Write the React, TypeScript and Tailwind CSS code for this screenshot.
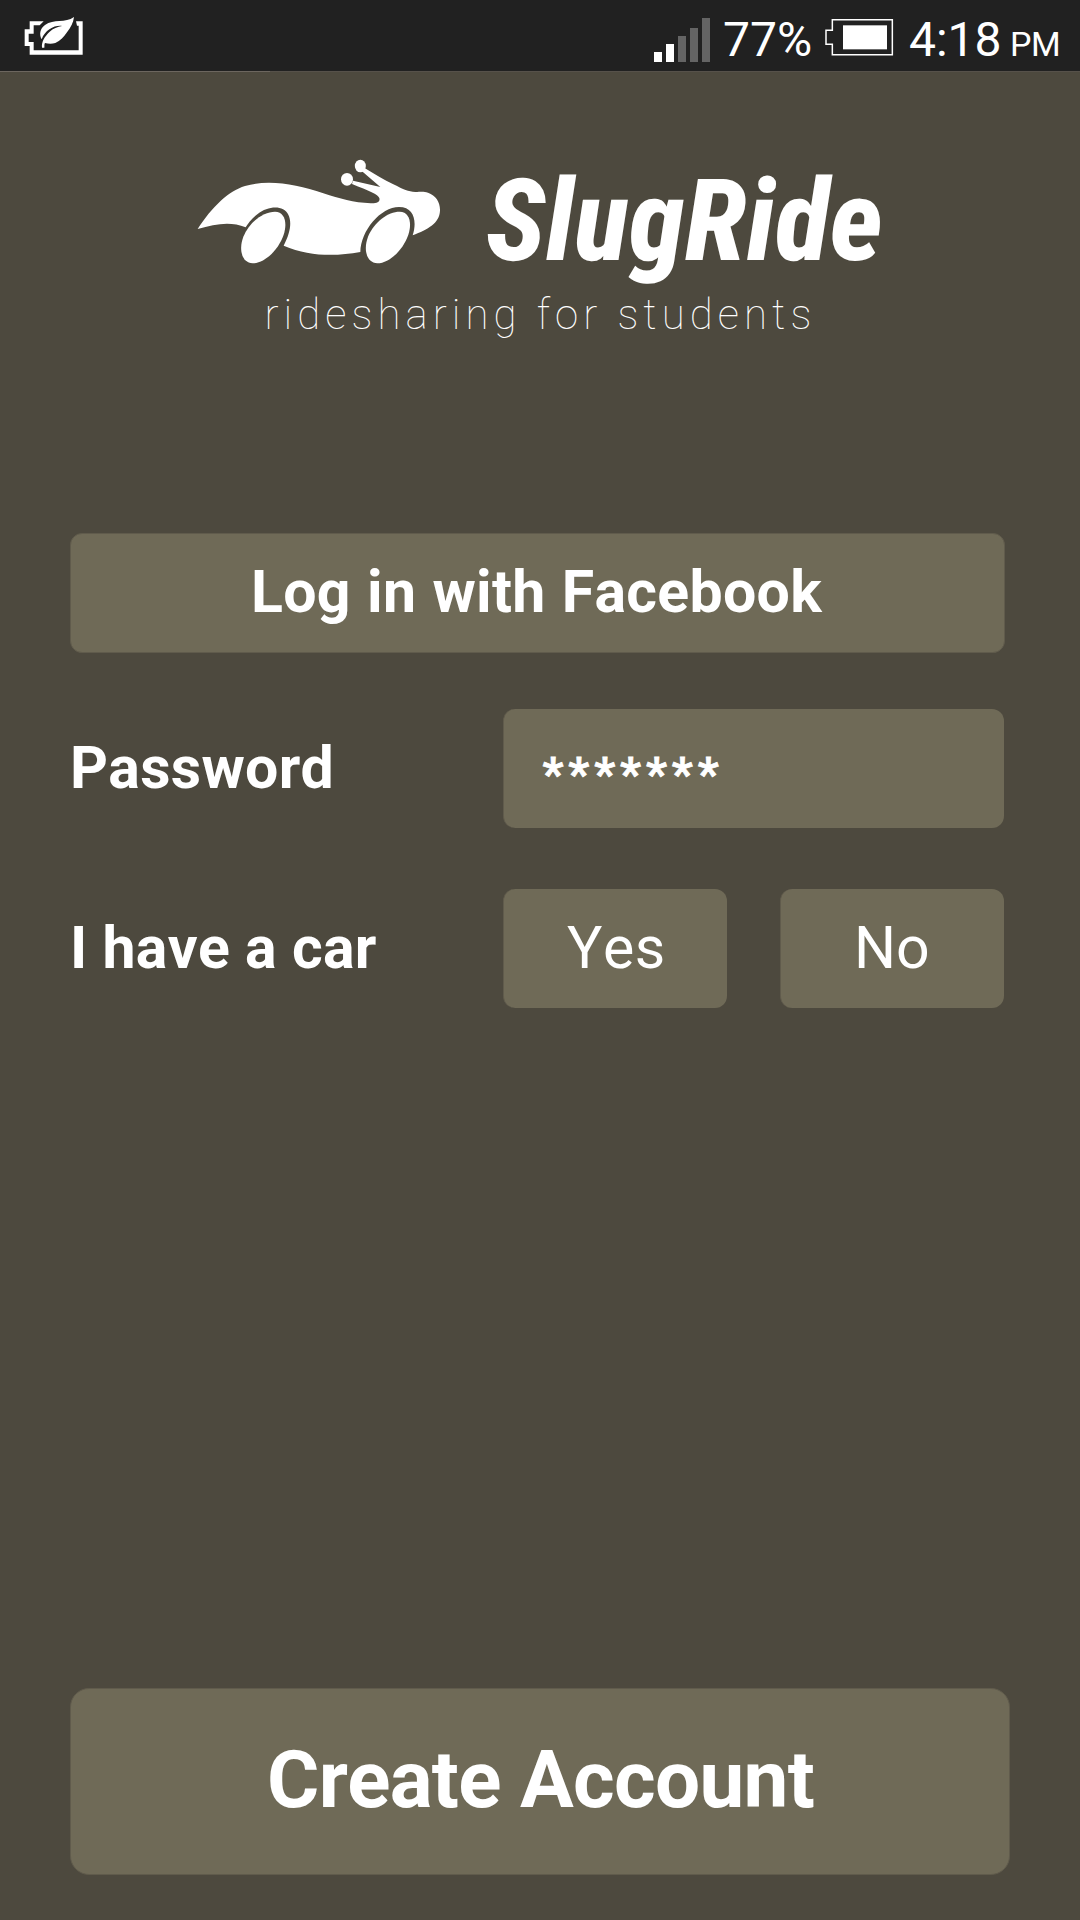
import React from "react";

function PowerSaverIcon() {
  return (
    <svg className="block h-[40px] w-[60px]" viewBox="70 45 180 120" fill="#fff">
      <path d="M132 64H90V88H75V138H90V164H249V64H229L232 77H237V151H102V126H87V101H102V76H120Z" />
      <path d="M223 51C221 68 213 83 202 97C193 110 182 123 167 129C156 132 145 131 136 129C133 133 135 138 134 143H127C125 125 135 109 150 95C160 86 174 80 187 78C165 75 137 89 126 118C118 103 121 86 136 75C162 56 197 70 223 51Z" />
    </svg>
  );
}

function SignalBars() {
  return (
    <div className="flex h-[44px] w-[56px] items-end gap-[4px]">
      <div className="h-[10px] w-[8px] bg-white" />
      <div className="h-[18px] w-[8px] bg-white" />
      <div className="h-[26px] w-[8px] bg-[#646464]" />
      <div className="h-[34px] w-[8px] bg-[#646464]" />
      <div className="h-[44px] w-[8px] bg-[#646464]" />
    </div>
  );
}

function BatteryIcon() {
  return (
    <svg className="block h-[38px] w-[70px]" viewBox="552 55 210 114">
      <path d="M577 60H757V165H577V134H558V92H577Z" fill="none" stroke="#fff" strokeWidth="4.5" />
      <rect x="609" y="77" width="132" height="72" fill="#fff" />
    </svg>
  );
}

function SlugCar() {
  return (
    <svg className="block h-[140px] w-[280px] shrink-0" viewBox="0 0 840 420" fill="#fff">
      <path d="M53 267C95 202 145 153 195 138C270 117 350 134 430 160C480 176 520 188 572 190C592 191 601 185 598 174C595 163 567 153 516 132L519 122L601 141L546 94L555 85C583 102 612 120 640 133C672 149 684 155 706 156C724 155 732 154 744 158C768 166 781 187 780 212C778 250 745 267 698 286C711 246 704 201 657 201C602 201 542 272 541 336C463 350 387 349 311 317C331 279 336 246 325 224C311 194 264 197 233 222C214 237 205 250 197 262C152 243 107 251 53 267Z" />
      <ellipse cx="501" cy="118" rx="18" ry="19" />
      <ellipse cx="541" cy="78" rx="16.5" ry="19" />
      <path d="M285 215C316 216 322 250 311 284C296 328 255 370 218 370C184 368 176 327 190 290C208 246 250 215 285 215Z" />
      <path d="M659 215C690 216 696 250 685 284C670 328 629 370 592 370C558 368 550 327 564 290C582 246 624 215 659 215Z" />
    </svg>
  );
}

export default function App() {
  return (
    <div className="h-[1920px] w-[1080px] overflow-hidden bg-[#4d493e] font-[Roboto,sans-serif] text-white [font-kerning:none]">
      <header className="flex h-[71px] items-start bg-[#212121]">
        <div className="ml-[23.3px] mt-[15px]">
          <PowerSaverIcon />
        </div>
        <div className="ml-auto mt-[18px]">
          <SignalBars />
        </div>
        <span className="ml-[13px] mt-[16px] w-[89px] text-[48px] leading-[48px]">77%</span>
        <div className="ml-[12px] mt-[18.3px]">
          <BatteryIcon />
        </div>
        <span className="ml-[15px] mt-[16px] w-[93px] text-[48px] leading-[48px]">4:18</span>
        <span className="ml-[8px] mr-[19px] mt-[27px] w-[51px] text-[34px] leading-[34px] tracking-[-0.5px]">PM</span>
      </header>
      <div className="flex h-px bg-[#56514a]">
        <div className="w-[270px] bg-[#6c665f]" />
      </div>

      <section className="flex h-[461px] flex-col pt-[68px]">
        <div className="flex h-[140px] items-start pl-[180px]">
          <SlugCar />
          <h1 className="ml-[26px] mt-[25px] origin-[0_95px] skew-x-[1deg] whitespace-nowrap font-['Roboto_Condensed',Roboto,sans-serif] text-[114px] font-extrabold italic leading-[112px]">
            SlugRide
          </h1>
        </div>
        <p className="ml-[264.5px] mt-[14px] whitespace-nowrap text-[42px] font-thin leading-[42px] tracking-[5.05px]">
          ridesharing for students
        </p>
      </section>

      <main className="flex flex-col pl-[70px] text-[59px]">
        <button className="flex h-[120px] w-[935px] items-center rounded-[12px] border border-[#605b4c] bg-[#6f6a57] pb-[2px] pl-[180px] font-bold tracking-[0.3px] [word-spacing:1.2px]">
          Log in with Facebook
        </button>
        <div className="mt-[56px] flex h-[119px]">
          <label className="flex w-[433px] items-center pb-[1px] font-bold tracking-[0.3px]">Password</label>
          <div className="flex w-[501px] items-center rounded-[12px] border-l border-[#605b4c] bg-[#6f6a57] pl-[38.4px] pt-[12px] text-[46px] font-bold tracking-[5px] [-webkit-text-stroke:0.8px_white]">
            *******
          </div>
        </div>
        <div className="mt-[61px] flex h-[119px]">
          <span className="flex w-[433px] items-center pb-[1px] font-bold tracking-[0.3px]">I have a car</span>
          <button className="flex w-[224px] items-center rounded-[12px] border-l border-[#605b4c] bg-[#6f6a57] pb-[1px] pl-[63px] tracking-[0.5px]">Yes</button>
          <button className="ml-[53px] flex w-[224px] items-center rounded-[12px] border-l border-[#605b4c] bg-[#6f6a57] pb-[1px] pl-[73px]">No</button>
        </div>
        <button className="mt-[680px] flex h-[187px] w-[940px] items-center rounded-[19px] border border-[#605b4c] bg-[#6f6a57] pb-[3px] pl-[196px] text-[80px] font-bold tracking-[-0.7px]">
          Create Account
        </button>
      </main>
    </div>
  );
}
